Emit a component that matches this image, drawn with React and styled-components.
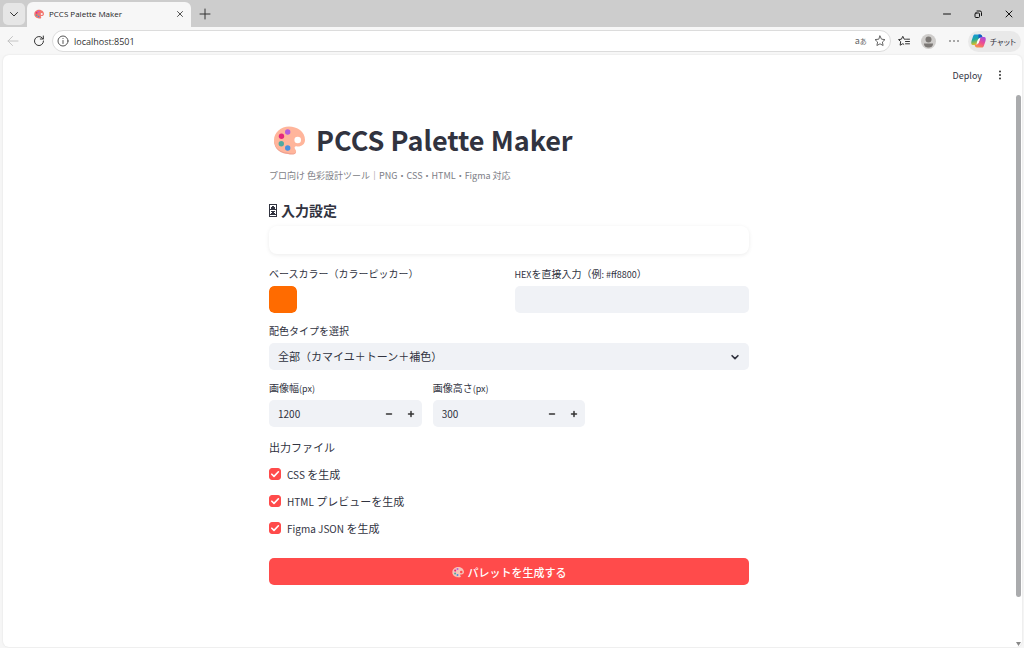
import React, { useState } from "react";
import styled, { createGlobalStyle } from "styled-components";

const GlobalStyle = createGlobalStyle`
  *, *::before, *::after { box-sizing: border-box; }
  html, body { margin: 0; }
  body {
    background: #f6f6f6;
    color: #31333f;
    font-family: "Noto Sans CJK JP", sans-serif;
    font-size: 11px;
  }
  button, input, select { font: inherit; color: inherit; }
  button { border: 0; padding: 0; background: none; cursor: pointer; }
`;

const Browser = styled.div`
  display: flex;
  flex-direction: column;
  min-height: 100vh;
`;

/* ---------- browser chrome ---------- */

const TabStrip = styled.div`
  display: flex;
  align-items: center;
  height: 27px;
  padding-left: 3px;
  background: #cdcdcd;
`;

const IconButton = styled.button`
  display: flex;
  align-items: center;
  justify-content: center;
  flex: none;
  width: ${(p) => p.$width || 24}px;
  height: 22px;
  color: ${(p) => p.$color || "#333"};
`;

const TabSearch = styled(IconButton)`
  margin-right: 2px;
  border-radius: 5px;
  background: #e6e6e6;
`;

const Tab = styled.div`
  display: flex;
  align-items: center;
  align-self: flex-end;
  gap: 5px;
  width: 164px;
  height: 25px;
  padding: 0 0 2px 7px;
  border-radius: 6px 6px 0 0;
  background: #f7f7f7;
  font-family: "Open Sans", sans-serif;
  font-size: 8px;
  color: #1f1f1f;
`;

const TabTitle = styled.span`
  flex: 1;
  white-space: nowrap;
`;

const WindowControls = styled.div`
  display: flex;
  margin-left: auto;
`;

const Toolbar = styled.div`
  display: flex;
  align-items: center;
  height: 28px;
  padding-right: 3px;
  background: #f7f7f7;
`;

const AddressBar = styled.div`
  display: flex;
  align-items: center;
  flex: 1;
  min-width: 0;
  height: 22px;
  padding-left: 4px;
  border: 1px solid #dcdcdc;
  border-radius: 11px;
  background: #fff;
`;

const Address = styled.input`
  flex: 1;
  min-width: 0;
  padding: 0 5px;
  border: 0;
  outline: 0;
  background: none;
  font-family: "Open Sans", sans-serif;
  font-size: 9px;
  color: #333;
`;

const Translate = styled.span`
  font-size: 9px;
  line-height: 12px;
  & > small { font-size: 7px; }
`;

const ChatButton = styled.button`
  display: flex;
  align-items: center;
  gap: 4px;
  height: 21px;
  padding: 0 5px 0 3px;
  border-radius: 11px;
  background: #e9e9e9;
  font-size: 8px;
  font-feature-settings: "palt";
  white-space: nowrap;
`;

/* ---------- page ---------- */

const Frame = styled.div`
  display: flex;
  flex-direction: column;
  flex: 1;
  margin: 0 2px 1px 3px;
  border-radius: 6px;
  background: #fff;
  box-shadow: 0 0 2px #ddd;
`;

const AppHeader = styled.header`
  display: flex;
  align-items: center;
  justify-content: flex-end;
  gap: 6px;
  height: 40px;
  padding-right: 10px;
`;

const DeployButton = styled.button`
  font-size: 9px;
`;

const Body = styled.div`
  display: flex;
  flex: 1;
`;

const ScrollTrack = styled.div`
  display: flex;
  flex-direction: column;
  justify-content: space-between;
  align-items: center;
  width: 7px;
  padding-bottom: 1px;
`;

const ScrollThumb = styled.div`
  flex: 0 1 502px;
  width: 5px;
  border-radius: 3px;
  background: #aaabad;
`;

const Main = styled.main`
  flex: 1;
  padding: 25px 16px 48px;
`;

const Form = styled.form`
  display: flex;
  flex-direction: column;
  gap: 10px;
  max-width: 480px;
  margin: 0 auto;
`;

const Intro = styled.div`
  display: flex;
  flex-direction: column;
  gap: 8px;
`;

const Title = styled.h1`
  display: flex;
  align-items: center;
  gap: 11px;
  margin: 0;
  padding-left: 4px;
  font-size: 27px;
  font-weight: 700;
  line-height: 40px;
`;

const Caption = styled.p`
  margin: 0;
  font-size: 9px;
  line-height: 16px;
  color: #7c7d85;
`;

const SectionTitle = styled.h2`
  display: flex;
  align-items: center;
  gap: 4px;
  margin: 6px 0 0;
  font-size: 14px;
  font-weight: 700;
  line-height: 20px;
`;

const Card = styled.div`
  height: 28px;
  margin: -4px 0 2px;
  border-radius: 8px;
  background: #fff;
  box-shadow: 0 1px 4px rgba(0, 0, 0, 0.08);
`;

const Columns = styled.div`
  display: grid;
  grid-template-columns: repeat(${(p) => p.$count}, 1fr);
  gap: 11px;
`;

const Field = styled.div`
  display: flex;
  flex-direction: column;
  gap: 4px;
  min-width: 0;
`;

const Label = styled.label`
  font-size: 10px;
  line-height: 16px;
  white-space: nowrap;
`;

const Latin = styled.span`
  font-size: ${(p) => p.$size}px;
  line-height: 1;
`;

const ColorInput = styled.input`
  appearance: none;
  width: 28px;
  height: 27px;
  padding: 0;
  border: 0;
  border-radius: 5px;
  overflow: hidden;
  background: none;
  &::-webkit-color-swatch-wrapper { padding: 0; }
  &::-webkit-color-swatch { border: 0; border-radius: 5px; }
`;

const TextInput = styled.input`
  width: 100%;
  height: 27px;
  padding: 0 9px;
  border: 0;
  border-radius: 5px;
  background: #f0f2f6;
`;

const SelectBox = styled.div`
  position: relative;
  height: 27px;
  & > svg {
    position: absolute;
    top: 9px;
    right: 9px;
    pointer-events: none;
  }
`;

const Select = styled.select`
  appearance: none;
  display: block;
  width: 100%;
  height: 27px;
  padding: 0 24px 2px 9px;
  border: 0;
  border-radius: 5px;
  background: #f0f2f6;
`;

const NumberBox = styled.div`
  display: flex;
  align-items: center;
  height: 27px;
  border-radius: 5px;
  background: #f0f2f6;
`;

const NumberInput = styled.input`
  appearance: textfield;
  flex: 1;
  min-width: 0;
  padding: 0 0 1px 9px;
  border: 0;
  outline: 0;
  background: none;
  font-size: 10px;
  &::-webkit-inner-spin-button { appearance: none; }
`;

const Outputs = styled.fieldset`
  display: flex;
  flex-direction: column;
  gap: 11px;
  margin: 0;
  padding: 0;
  border: 0;
`;

const Legend = styled.legend`
  margin-bottom: 9px;
  padding: 0;
  line-height: 20px;
`;

const CheckLabel = styled.label`
  display: flex;
  align-items: center;
  gap: 6px;
  height: 16px;
  line-height: 16px;
`;

const CheckBox = styled.span`
  position: relative;
  width: 12px;
  height: 12px;
  & > svg {
    position: absolute;
    inset: 0;
    pointer-events: none;
  }
`;

const CheckInput = styled.input`
  appearance: none;
  display: block;
  width: 12px;
  height: 12px;
  margin: 0;
  border: 1px solid #c6c8d0;
  border-radius: 3px;
  &:checked { border-color: #ff4b4b; background: #ff4b4b; }
`;

const SubmitButton = styled.button`
  display: flex;
  align-items: center;
  justify-content: center;
  gap: 4px;
  height: 27px;
  margin-top: 12px;
  border-radius: 5px;
  background: #ff4b4b;
  color: #fff;
  font-weight: 500;
`;

/* ---------- drawings ---------- */

const Line = ({ size = 12, width = 1, children, ...rest }) => (
  <svg width={size} height={size} viewBox="0 0 12 12" fill="none" stroke="currentColor"
    strokeWidth={width} strokeLinecap="round" strokeLinejoin="round" aria-hidden="true" {...rest}>
    {children}
  </svg>
);

const Palette = ({ size, body = "#ffb59b", hole = "#fff" }) => (
  <svg width={size} height={size} viewBox="0 0 32 32" aria-hidden="true">
    <path fill="#f0a08f" d="M1 17c0 8 7 13 14 13 3 1 8 1 8-2l-3-3Z" />
    <path fill={body} d="M16 2.500C8 2.500 1 8.500 1 16c0 7.500 6.500 12.500 13 12.500 3 1 6 1.500 8 .5 2-1 1-3 0-4-1-2 0-3 2-2.500 4 .5 8-2 8-6.500C32 7.500 24 2.500 16 2.500Z" />
    <circle cx="24.700" cy="16" r="3.300" fill={hole} />
    <circle cx="14.700" cy="8" r="2.700" fill="#b65bdc" />
    <circle cx="8.500" cy="12.300" r="2.700" fill="#e5267c" />
    <circle cx="8.300" cy="19.700" r="2.700" fill="#4fa9a1" />
    <circle cx="14.700" cy="24" r="2.700" fill="#4a8fe0" />
  </svg>
);

const Knobs = () => (
  <svg width="8" height="13" viewBox="0 0 8 13" aria-hidden="true">
    <rect x="0.500" y="0.500" width="7" height="12" fill="#fff" stroke="#31333f" />
    <path fill="#31333f" d="M3 2h2v1h1v2h1v1H1V5h1V3h1zM2 7h4v1H5v1h1v1h1v1H1v-1h1V9h1V8H2z" />
  </svg>
);

const Copilot = () => (
  <svg width="15" height="14" viewBox="0 0 30 28" aria-hidden="true">
    <defs>
      <linearGradient id="cpA" x1="0" y1="0" x2="0.3" y2="1">
        <stop offset="0" stopColor="#1596e8" /><stop offset="0.5" stopColor="#1fa9a0" /><stop offset="1" stopColor="#e8c61a" />
      </linearGradient>
      <linearGradient id="cpB" x1="0.8" y1="0" x2="0.3" y2="1">
        <stop offset="0" stopColor="#a34be0" /><stop offset="0.5" stopColor="#ee4c92" /><stop offset="1" stopColor="#f8944a" />
      </linearGradient>
    </defs>
    <path fill="url(#cpA)" d="M8 1h10c3 0 4 2 5 6h-4c-3 0-4 2-5 5l-2 6c-1 3-2 4-5 4H4c-4 0-4-4-3-8L4 5c1-3 2-4 4-4Z" />
    <path fill="#1757c8" d="M15 1h3c3 0 4 2 5 6h-4c-2 0-3 1-4 3Z" />
    <path fill="url(#cpB)" d="M22 27H12c-3 0-4-2-5-6h4c3 0 4-2 5-5l2-6c1-3 2-4 5-4h3c4 0 4 4 3 8l-3 9c-1 3-2 4-4 4Z" />
    <path fill="#fff" d="m14 11 4-1-3 8-4 1Z" />
  </svg>
);

const STAR = "M6 1l1.500 3.200 3.500.4-2.600 2.400.7 3.500L6 8.800 2.900 10.500l.7-3.500L1 4.600l3.500-.4Z";

function NumberField({ id, label, initial }) {
  const [value, setValue] = useState(initial);
  return (
    <Field>
      <Label htmlFor={id}>{label}<Latin $size={9}>(px)</Latin></Label>
      <NumberBox>
        <NumberInput id={id} type="number" value={value} onChange={(e) => setValue(Number(e.target.value))} />
        <IconButton type="button" $width={22} aria-label="減らす" onClick={() => setValue(value - 1)}>
          <Line width={1.5}><path d="M3.500 6h5" /></Line>
        </IconButton>
        <IconButton type="button" $width={22} aria-label="増やす" onClick={() => setValue(value + 1)}>
          <Line width={1.5}><path d="M3.500 6h5M6 3.500v5" /></Line>
        </IconButton>
      </NumberBox>
    </Field>
  );
}

function CheckField({ latin, children }) {
  return (
    <CheckLabel>
      <CheckBox>
        <CheckInput type="checkbox" defaultChecked />
        <Line color="#fff" width={1.6}><path d="M2.800 6.200 5 8.400 9.400 3.800" /></Line>
      </CheckBox>
      <span><Latin $size={10}>{latin}</Latin> {children}</span>
    </CheckLabel>
  );
}

export default function App() {
  return (
    <Browser>
      <GlobalStyle />
      <TabStrip>
        <TabSearch $width={22} aria-label="タブ検索"><Line><path d="M2.500 4.500 6 8l3.500-3.500" /></Line></TabSearch>
        <Tab>
          <Palette size={10} body="#f2766f" hole="#f7f7f7" />
          <TabTitle>PCCS Palette Maker</TabTitle>
          <IconButton $width={22} aria-label="タブを閉じる"><Line size={10}><path d="m3 3 6 6M9 3 3 9" /></Line></IconButton>
        </Tab>
        <IconButton $width={28} aria-label="新しいタブ"><Line><path d="M1 6h10M6 1v10" /></Line></IconButton>
        <WindowControls>
          <IconButton $width={31} $color="#111" aria-label="最小化"><Line><path d="M2.500 6h7" /></Line></IconButton>
          <IconButton $width={31} $color="#111" aria-label="元に戻す">
            <Line><rect x="3" y="5" width="4.500" height="4.500" rx="1" /><path d="M5 3h3q1.500 0 1.500 1.500v3" /></Line>
          </IconButton>
          <IconButton $width={31} $color="#111" aria-label="閉じる"><Line><path d="m3 3 6 6M9 3 3 9" /></Line></IconButton>
        </WindowControls>
      </TabStrip>

      <Toolbar>
        <IconButton $width={26} $color="#c4c4c4" aria-label="戻る"><Line><path d="M11 6H1M5.500 1.500 1 6l4.500 4.500" /></Line></IconButton>
        <IconButton $width={26} aria-label="更新"><Line><path d="M10.500 6A4.500 4.500 0 1 1 9 2.700L10.200 4M10.300 1v3h-3" /></Line></IconButton>
        <AddressBar>
          <Line color="#555"><circle cx="6" cy="6" r="5" /><path d="M6 5.500v3M6 3.500v.1" /></Line>
          <Address aria-label="アドレス" defaultValue="localhost:8501" />
          <IconButton $width={18} $color="#666" aria-label="翻訳"><Translate>a<small>あ</small></Translate></IconButton>
          <IconButton $width={20} $color="#666" aria-label="お気に入りに追加"><Line><path d={STAR} /></Line></IconButton>
        </AddressBar>
        <IconButton $width={26} aria-label="お気に入り">
          <Line><path d="M7.500 4.200H6.200L4.800 1.300 3.400 4.200.5 4.600l2.200 2-.6 3.600 2.700-1.500 1 .6M8.500 4.200h3M7.500 6.500h4M7.500 8.800h4" /></Line>
        </IconButton>
        <IconButton aria-label="プロフィール">
          <svg width="15" height="15" viewBox="0 0 15 15" aria-hidden="true">
            <circle cx="7.500" cy="7.500" r="7.500" fill="#cfcdcb" />
            <circle cx="7.500" cy="5.500" r="3" fill="#7c7875" />
            <path fill="#7c7875" d="M3 9.500h9c0 3-2 4-4.500 4S3 12.500 3 9.500Z" />
          </svg>
        </IconButton>
        <IconButton $width={27} aria-label="設定など"><Line width={1.5}><path d="M2 6h.01M6 6h.01M10 6h.01" /></Line></IconButton>
        <ChatButton><Copilot />チャット</ChatButton>
      </Toolbar>

      <Frame>
        <AppHeader>
          <DeployButton>Deploy</DeployButton>
          <IconButton aria-label="メニュー"><Line width={2}><path d="M6 2.500v.01M6 6v.01M6 9.500v.01" /></Line></IconButton>
        </AppHeader>
        <Body>
          <Main>
            <Form onSubmit={(e) => e.preventDefault()}>
              <Intro>
                <Title><Palette size={32} />PCCS Palette Maker</Title>
                <Caption>プロ向け 色彩設計ツール｜PNG・CSS・HTML・Figma 対応</Caption>
              </Intro>
              <SectionTitle><Knobs />入力設定</SectionTitle>
              <Card />
              <Columns $count={2}>
                <Field>
                  <Label htmlFor="base">ベースカラー（カラーピッカー）</Label>
                  <ColorInput id="base" type="color" defaultValue="#ff6b00" />
                </Field>
                <Field>
                  <Label htmlFor="hex">
                    <Latin $size={9}>HEX</Latin>を直接入力（例<Latin $size={9}>: #ff8800</Latin>）
                  </Label>
                  <TextInput id="hex" type="text" />
                </Field>
              </Columns>
              <Field>
                <Label htmlFor="scheme">配色タイプを選択</Label>
                <SelectBox>
                  <Select id="scheme"><option>全部（カマイユ＋トーン＋補色）</option></Select>
                  <Line size={10} width={2}><path d="M2.500 4.500 6 8l3.500-3.500" /></Line>
                </SelectBox>
              </Field>
              <Columns $count={3}>
                <NumberField id="w" label="画像幅" initial={1200} />
                <NumberField id="h" label="画像高さ" initial={300} />
              </Columns>
              <Outputs>
                <Legend>出力ファイル</Legend>
                <CheckField latin="CSS">を生成</CheckField>
                <CheckField latin="HTML">プレビューを生成</CheckField>
                <CheckField latin="Figma JSON">を生成</CheckField>
              </Outputs>
              <SubmitButton type="submit"><Palette size={12} body="#f5c3b8" hole="#ff4b4b" />パレットを生成する</SubmitButton>
            </Form>
          </Main>
          <ScrollTrack aria-hidden="true">
            <ScrollThumb />
            <svg width="5" height="4" viewBox="0 0 5 4"><path fill="#888" d="M0 0h5L2.500 4Z" /></svg>
          </ScrollTrack>
        </Body>
      </Frame>
    </Browser>
  );
}
